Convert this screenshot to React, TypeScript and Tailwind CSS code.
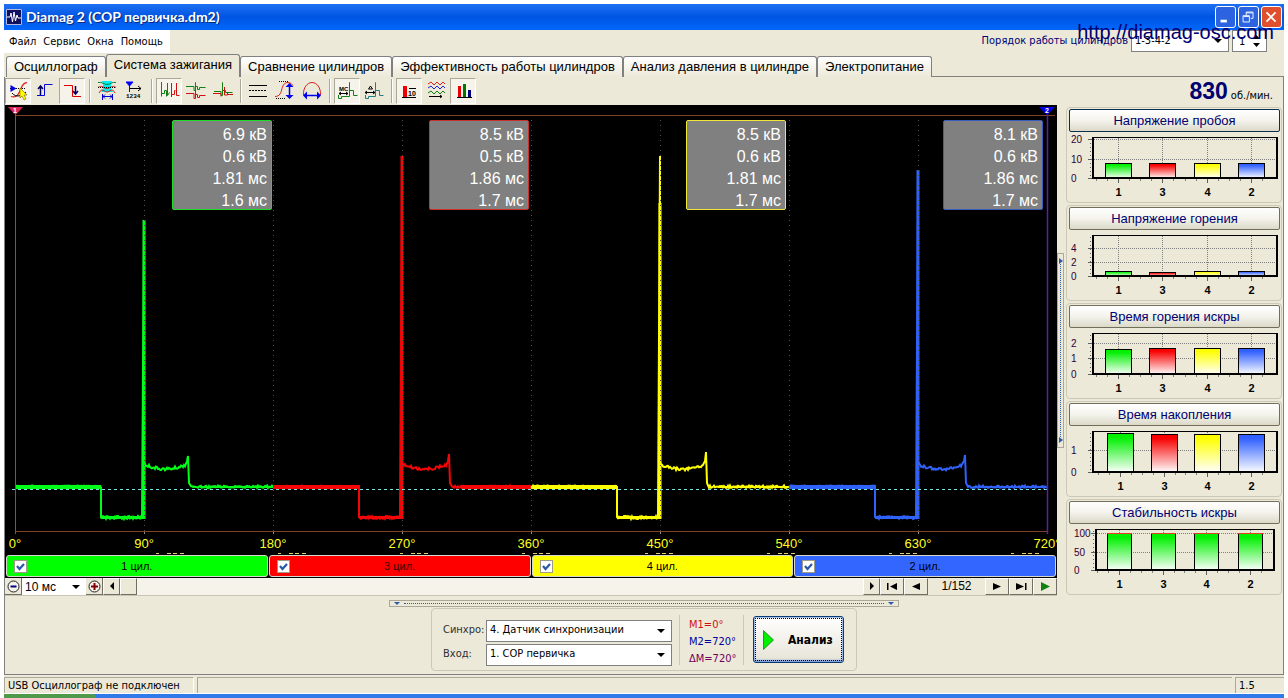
import { useState, type ReactNode } from 'react';
import clsx from 'clsx';

interface Cylinder {
  id: number;
  color: string;
  barClass: string;
  boxClass: string;
  values: string[];
  start: number;
  peak: number;
  spike: number;
  spikeTop: number;
}

const CYLINDERS: Cylinder[] = [
  { id: 1, color: '#00ff18', barClass: 'bg-[#00ff00]', boxClass: 'border-[#1edc28]', values: ['6.9 кВ', '0.6 кВ', '1.81 мс', '1.6 мс'], start: 10, peak: 115, spike: 173, spikeTop: 351 },
  { id: 3, color: '#f50505', barClass: 'bg-[#ff0000] text-[#400000]', boxClass: 'border-[#c8322e]', values: ['8.5 кВ', '0.5 кВ', '1.86 мс', '1.7 мс'], start: 268, peak: 51, spike: 176, spikeTop: 349 },
  { id: 4, color: '#ffff00', barClass: 'bg-[#ffff00]', boxClass: 'border-[#f0e63c]', values: ['8.5 кВ', '0.6 кВ', '1.81 мс', '1.7 мс'], start: 526, peak: 51, spike: 175, spikeTop: 347 },
  { id: 2, color: '#2f62fa', barClass: 'bg-[#3366ff]', boxClass: 'border-[#3a5cc0]', values: ['8.1 кВ', '0.6 кВ', '1.86 мс', '1.7 мс'], start: 784, peak: 65, spike: 176, spikeTop: 350 },
];

const TABS = [
  'Осциллограф',
  'Система зажигания',
  'Сравнение цилиндров',
  'Эффективность работы цилиндров',
  'Анализ давления в цилиндре',
  'Электропитание',
];

const DEGREES = ['0°', '90°', '180°', '270°', '360°', '450°', '540°', '630°', '720°'];

/* ---------- toolbar icons, all on a 26x26 canvas ---------- */

const ICONS: Record<string, ReactNode> = {
  cursor: (
    <>
      <path d="M5 10.500h16" stroke="#000" strokeDasharray="1 1" />
      <path d="M6 18.500c6 2 8-3 10-8s3-5 6-6" stroke="#e02020" strokeWidth="1.300" />
      <path d="M7 15c4 5 10 3 14-1" stroke="#000" />
      <path d="M5.500 7v7l6-3.500z" fill="#0000e8" />
      <path d="M15 10v10l2-2 2 4 2-1-2-4h3z" fill="#ffff00" stroke="#806000" strokeWidth=".6" />
    </>
  ),
  rise: (
    <>
      <path d="M5 17.500h7.500v-11h8" stroke="#0000e0" />
      <path d="M8.500 17V9M6 11l2.500-3L11 11" stroke="#000060" strokeWidth="1.500" />
    </>
  ),
  fall: (
    <>
      <path d="M5 7.500h8.500v11h8.500" stroke="#e00000" />
      <path d="M16.500 8v8M14 13l2.500 3 2.500-3" stroke="#000060" strokeWidth="1.500" />
    </>
  ),
  window: (
    <>
      <path d="M8 3h10l-1 4v4l2 3H7l2-3V7z" fill="#00f0f0" />
      <path d="M4 9.500c4-3 6 1 9 1s5-4 9-1M5 15c3-6 5-1 8-1s5-5 8 1" stroke="#d02020" />
      <path d="M4 4.500c4-1 6 2 9 2s5-3 9-2" stroke="#108040" />
      <path d="M4 9.500h18" stroke="#000" strokeDasharray="1 1" />
      <path d="M8.500 16v6M18.500 16v6M9 18.500h9M11 16.500l-2 2 2 2M16 16.500l2 2-2 2" stroke="#0000d0" />
    </>
  ),
  order: (
    <>
      <path d="M5 4h7l-3.500 4z" fill="#0000ff" stroke="#0000ff" />
      <path d="M8.500 7v7" stroke="#0000ff" />
      <path d="M9 10.500h11M17 8l3 2.500-3 2.500" stroke="#000" />
      <text x="5" y="20" fontSize="6" fontWeight="bold" fill="#000" fontFamily="Liberation Mono">1234</text>
    </>
  ),
  row: (
    <>
      <path d="M5.500 4v14.500M5.500 15.500h3v-3h2v6M11.500 5v12.500l2-3" stroke="#108010" />
      <path d="M15.500 5v14M15.500 16.500h3v-4h1M20.500 5v12.500h3" stroke="#d01010" />
    </>
  ),
  stack: (
    <>
      <path d="M3 8.500h8v4h1.500V4.500v4h2v3h2v-2h6" stroke="#108010" />
      <path d="M3 15.500h8v5h1.500v-8v4h2v3h2v-2h6" stroke="#d01010" />
    </>
  ),
  overlay: (
    <>
      <path d="M4 13.500h7v4h1.500V4.500v8h3v2h7" stroke="#108010" />
      <path d="M3 15.500h8v3M14.500 9v8h3v-3M17 16.500h6" stroke="#d01010" />
    </>
  ),
  lines: (
    <>
      <path d="M4 7.500h18M4 18.500h18" stroke="#000" />
      <path d="M4 12.500h18" stroke="#000" strokeDasharray="2 1" />
    </>
  ),
  vertical: (
    <>
      <path d="M7 3.500h9M4 20.500h9" stroke="#000" strokeDasharray="1 1" />
      <path d="M3 18.500c5 0 6-4 7-8s3-6 6-6 4 2 5 3" stroke="#d82020" />
      <path d="M17.500 7v12" stroke="#0000f0" strokeWidth="1.500" />
      <path d="M13.500 9h8l-4-4zM13.500 17h8l-4 4z" fill="#0000f0" />
    </>
  ),
  horizontal: (
    <>
      <path d="M4.500 17C4 10 8 4.500 13 4.500s9 5.500 8.500 12.500" stroke="#d82020" />
      <path d="M7 17.500h12" stroke="#0000f0" strokeWidth="1.500" />
      <path d="M8 13.500v8l-4-4zM18 13.500v8l4-4z" fill="#0000f0" />
    </>
  ),
  timeMark: (
    <>
      <text x="5" y="13" fontSize="6" fontWeight="bold" fill="#000" fontFamily="Liberation Sans">MC</text>
      <path d="M5 15.500h9M7 14l-2 1.500L7 17M12 14l2 1.500-2 1.500" stroke="#000" />
      <path d="M4.500 17v3.500h3v-2h8V4.500v8h4v5h4" stroke="#108010" />
    </>
  ),
  angleMark: (
    <>
      <path d="M9.500 8l-2 3h4zM4 14.500h10M6 13l-2 1.500L6 16M12 13l2 1.500-2 1.500" stroke="#000" />
      <path d="M4.500 17v3.500h3v-2h7V4.500v8h4v5h4" stroke="#208080" />
    </>
  ),
  numbers: (
    <>
      <path d="M7 8h4v11H7z" fill="#f00000" />
      <path d="M6 19.500h14M13 10.500h7" stroke="#000" />
      <text x="12" y="18" fontSize="7" fontWeight="bold" fill="#000" fontFamily="Liberation Sans">10</text>
    </>
  ),
  waves: (
    <>
      <path d="M5 6l3-2 3 3 3-3 3 3 3-3 2 2" stroke="#e02020" />
      <path d="M5 10l3-2 3 3 3-3 3 3 3-3 2 2" stroke="#2020e0" />
      <path d="M5 15l3-2 3 3 3-3 3 3 3-3 2 2" stroke="#108010" />
      <path d="M6 18.500h13M17 17l2 1.500-2 1.500" stroke="#000" />
    </>
  ),
  bars: (
    <>
      <path d="M8 8h3v11H8z" fill="#e80000" />
      <path d="M13 6h3v13h-3z" fill="#007800" />
      <path d="M18 12h3v7h-3z" fill="#000080" />
      <path d="M7 19.500h15" stroke="#000" />
    </>
  ),
};

const TOOLBAR: { name: string; label: string; pressed?: boolean }[][] = [
  [
    { name: 'cursor', label: 'Курсор', pressed: true },
    { name: 'rise', label: 'Фронт' },
    { name: 'fall', label: 'Спад', pressed: true },
  ],
  [
    { name: 'window', label: 'Окно' },
    { name: 'order', label: 'Порядок' },
  ],
  [
    { name: 'row', label: 'В ряд', pressed: true },
    { name: 'stack', label: 'Друг над другом' },
    { name: 'overlay', label: 'Наложение' },
  ],
  [
    { name: 'lines', label: 'Линии' },
    { name: 'vertical', label: 'По вертикали' },
    { name: 'horizontal', label: 'По горизонтали' },
  ],
  [
    { name: 'timeMark', label: 'Время', pressed: true },
    { name: 'angleMark', label: 'Угол' },
  ],
  [
    { name: 'numbers', label: 'Значения', pressed: true },
    { name: 'waves', label: 'Кадры' },
    { name: 'bars', label: 'Диаграммы', pressed: true },
  ],
];

function Toolbar() {
  return (
    <div className="flex items-center gap-px">
      {TOOLBAR.map((group, i) => (
        <div key={i} className="flex items-center gap-px">
          {i > 0 && <span className="mr-0.5 ml-[3px] h-6 w-0.5 border-l border-[#aca899] bg-white" />}
          {group.map((item) => (
            <button
              key={item.name}
              aria-label={item.label}
              aria-pressed={!!item.pressed}
              className={clsx(
                'size-[26px]',
                item.pressed && 'border border-t-[#aca899] border-r-white border-b-white border-l-[#aca899] bg-[#f5f3ea]',
              )}
            >
              <svg viewBox="0 0 26 26" fill="none" className={clsx('size-[26px]', item.pressed && '-m-px')}>
                {ICONS[item.name]}
              </svg>
            </button>
          ))}
        </div>
      ))}
    </div>
  );
}

/* ---------- oscilloscope ---------- */

const noise = (n: number) => {
  const s = Math.sin(n * 12.9898) * 43758.5453;
  return s - Math.floor(s);
};

function tracePath(c: Cylinder) {
  const pts: string[] = [];
  const put = (x: number, y: number) => pts.push(`${c.start + x},${y.toFixed(1)}`);
  for (let x = 0; x <= 86; x++) put(x, 380.5 + noise(c.start + x) * 2);
  put(86, 412);
  for (let x = 87; x <= 127; x++) put(x, 411 + noise(c.start + x) * 3);
  put(129, c.peak);
  put(129, 357);
  for (let x = 130; x < c.spike - 2; x++) {
    const t = (x - 130) / (c.spike - 132);
    put(x, 358 + 18 * t * (1 - t) + noise(c.start + x) * 3);
  }
  put(c.spike - 1, 356);
  put(c.spike, c.spikeTop);
  put(c.spike + 1, 378);
  for (let x = c.spike + 3; x <= 258; x++) put(x, 380.5 + noise(c.start + x * 3) * 2.5);
  return pts.join(' ');
}

function Trace({ c }: { c: Cylinder }) {
  const line = tracePath(c);
  return (
    <g fill="none" stroke={c.color}>
      <polyline points={line} strokeWidth="2" />
      <path d={`M${c.start} 382h86`} strokeWidth="4" />
      <path d={`M${c.start + c.spike + 12} 382h${246 - c.spike}`} strokeWidth={c.id === 3 ? 4 : 2} />
      <path d={`M${c.start + 86} 412.500h42`} strokeWidth="3" />
      <path d={`M${c.start + 129} 414V${c.id === 4 ? c.peak + 47 : c.peak}`} strokeWidth="3" />
    </g>
  );
}

function Scope({ visible }: { visible: Record<number, boolean> }) {
  return (
    <div className="relative min-h-[300px] flex-1 overflow-hidden">
      <svg viewBox="0 0 1052 429" preserveAspectRatio="none" className="absolute inset-0 size-full">
        {CYLINDERS.filter((c) => visible[c.id]).map((c) => (
          <Trace key={c.id} c={c} />
        ))}
        {[1, 2, 3, 4, 5, 6, 7].map((i) => (
          <g key={i}>
            <path d={`M${10.5 + i * 129} 15v411`} stroke="#505050" strokeDasharray="1 4" />
            <path d={`M${10.5 + i * 129} 427v4`} stroke="#909090" />
          </g>
        ))}
        <path d="M7 384.500h1037" stroke="#78e6e0" strokeDasharray="3 3" />
        <path d="M10 10.500h1040M10 426.500h1032" stroke="#80402c" />
        <path d="M10.500 9v422" stroke="#b03a50" />
        <path d="M1042.500 9v420" stroke="#5a22a0" strokeWidth="1.500" />
        <path d="M3 2h15l-7.500 8z" fill="#e0285a" />
        <path d="M1034 2h16l-8 8z" fill="#0000e8" />
        <text x="8" y="8" fontSize="7" fontWeight="bold" fill="#fff" fontFamily="Liberation Sans">1</text>
        <text x="1040" y="8" fontSize="7" fontWeight="bold" fill="#fff" fontFamily="Liberation Sans">2</text>
      </svg>
      <div className="absolute inset-x-0 top-[15px] grid grid-cols-4 pr-[14px] pl-[10px]">
        {CYLINDERS.map((c) => (
          <ul
            key={c.id}
            className={clsx('h-[90px] w-[100px] justify-self-end rounded-xs border bg-[#808080] pt-[3px] pr-1 text-right text-[16px] leading-[22px] text-white', c.boxClass)}
          >
            {c.values.map((v, i) => (
              <li key={i}>{v}</li>
            ))}
          </ul>
        ))}
      </div>
    </div>
  );
}

/* ---------- side charts ---------- */

interface SideChart {
  title: string;
  ticks: [string, number][];
  left: number;
  right: number;
  labelX: number;
  barX: number[];
  barWidth: number;
  tops: number[];
  colors: string[];
}

const MIXED = ['green', 'red', 'yellow', 'blue'];
const CHARTS: SideChart[] = [
  { title: 'Напряжение пробоя', ticks: [['20', 6], ['10', 26], ['0', 45]], left: 23, right: 209, labelX: 2, barX: [36, 80, 125, 169], barWidth: 27, tops: [30, 30, 30, 30], colors: MIXED },
  { title: 'Напряжение горения', ticks: [['4', 17], ['2', 31], ['0', 45]], left: 23, right: 209, labelX: 2, barX: [36, 80, 125, 169], barWidth: 27, tops: [40, 41, 40, 40], colors: MIXED },
  { title: 'Время горения искры', ticks: [['2', 14], ['1', 29], ['0', 45]], left: 23, right: 209, labelX: 2, barX: [36, 80, 125, 169], barWidth: 27, tops: [20, 19, 19, 19], colors: MIXED },
  { title: 'Время накопления', ticks: [['1', 23], ['0', 45]], left: 23, right: 209, labelX: 2, barX: [38, 82, 125, 169], barWidth: 27, tops: [6, 7, 7, 7], colors: MIXED },
  { title: 'Стабильность искры', ticks: [['100', 8], ['50', 27], ['0', 45]], left: 26, right: 206, labelX: 5, barX: [38, 82, 125, 169], barWidth: 25, tops: [8, 8, 8, 8], colors: ['green', 'green', 'green', 'green'] },
];

function SideChartView({ chart, focused }: { chart: SideChart; focused: boolean }) {
  const { left, right } = chart;
  return (
    <section className="rounded-[4px] border border-[#cbc8b6] p-px pl-0.5">
      <button
        className={clsx(
          'mb-px block h-[23px] w-full rounded-xs border bg-linear-to-b from-white via-[#f4f3ec] to-[#dcd9c8] text-[13px] leading-5 text-[#000070]',
          focused ? 'border-[#0a3050]' : 'border-[#716f5c]',
        )}
      >
        {chart.title}
      </button>
      <svg viewBox="0 0 211 68" className="block w-full" shapeRendering="crispEdges" fontFamily="Liberation Sans">
        {chart.ticks.map(([label, y]) => (
          <g key={label}>
            <path d={`M${left} ${y + 0.5}H${right}`} stroke="#808080" strokeDasharray="1 1" />
            <path d={`M${left - 4} ${y + 0.5}h4`} stroke="#606060" />
            <text x={chart.labelX} y={y + 4} fontSize="10" fill="#300030">{label}</text>
          </g>
        ))}
        {chart.barX.map((x, i) => {
          const mid = x + Math.floor(chart.barWidth / 2) + 0.5;
          const top = chart.tops[i];
          return (
            <g key={x}>
              <path d={`M${mid} 5V45`} stroke="#808080" strokeDasharray="1 1" />
              <path d={`M${mid} 46v4`} stroke="#606060" />
              <path d={`M${mid - 11} 46v2M${mid + 11} 46v2M${mid - 22} 46v2`} stroke="#808080" />
              <rect
                x={x + 0.5}
                y={top + 0.5}
                width={chart.barWidth - 1}
                height={45 - top}
                fill={`url(#bar-${chart.colors[i]})`}
                stroke="#000"
              />
              {top === 8 && <path d={`M${x} 8.500h${chart.barWidth}`} stroke="#e04020" />}
              <text x={mid} y="63" fontSize="11" fontWeight="bold" textAnchor="middle" fill="#000">
                {CYLINDERS[i].id}
              </text>
            </g>
          );
        })}
        <path d={`M${left - 1.5} 6V44`} stroke="#606060" strokeDasharray="1 3" />
        <path d={`M${left} 4.500H${right}`} stroke="#000" />
        <path d={`M${left + 1} 4V46M${right - 1} 4V46M${left} 45H${right}`} stroke="#000" strokeWidth="2" />
      </svg>
    </section>
  );
}

function Gradients() {
  const stops: [string, string][] = [['green', '#00f000'], ['red', '#f80000'], ['yellow', '#ffff00'], ['blue', '#3060ff']];
  return (
    <svg className="absolute size-0" aria-hidden="true">
      <defs>
        {stops.map(([id, color]) => (
          <linearGradient key={id} id={`bar-${id}`} x1="0" y1="0" x2="0" y2="1">
            <stop offset="0.1" stopColor={color} />
            <stop offset="1" stopColor="#fff" />
          </linearGradient>
        ))}
      </defs>
    </svg>
  );
}

/* ---------- small controls ---------- */

function Combo({ label, value, className }: { label: string; value: string; className: string }) {
  return (
    <span className={clsx('relative inline-block bg-white', className)}>
      <select aria-label={label} className="block size-full appearance-none truncate pr-4 pl-[3px] outline-none">
        <option>{value}</option>
      </select>
      <svg viewBox="0 0 8 4" className="pointer-events-none absolute top-1/2 right-1.5 -mt-0.5 h-1 w-2">
        <path d="M0 0h8L4 4z" />
      </svg>
    </span>
  );
}

function NavButton({ label, d, className, green }: { label: string; d: string; className: string; green?: boolean }) {
  return (
    <button
      aria-label={label}
      className={clsx('flex h-[17px] items-center justify-center border border-t-white border-r-[#716f64] border-b-[#716f64] border-l-white bg-[#ece9d8]', className)}
    >
      <svg viewBox="0 0 12 9" className="h-[9px] w-3" fill={green ? '#108010' : '#000'}>
        <path d={d} />
      </svg>
    </button>
  );
}

function ZoomButton({ label, plus }: { label: string; plus?: boolean }) {
  return (
    <button
      aria-label={label}
      className="flex size-[17px] items-center justify-center border-r border-b border-[#716f64] bg-[#ece9d8]"
    >
      <svg viewBox="0 0 13 13" className="size-[13px]" fill="none">
        <circle cx="6.500" cy="6.500" r="5.500" stroke="#202020" fill="#f6f4ea" />
        <path d={plus ? 'M3 6.500h7M6.500 3v7' : 'M3.500 6.500h6'} stroke={plus ? '#800000' : '#000080'} strokeWidth="2" />
      </svg>
    </button>
  );
}

function TitleBar() {
  const button = 'flex h-[22px] w-[21px] items-center justify-center rounded-[3px] border border-white';
  return (
    <header className="flex h-[26px] items-center bg-linear-to-b from-[#1e70f2] via-[#0054e3] to-[#0068fb] pr-0.5 pl-0.5">
      <svg viewBox="0 0 16 16" className="size-4" fill="none">
        <path d="M0 0h16v16H0z" fill="#101060" />
        <path d="M.5.5h15v15H.5z" stroke="#b0b8e0" />
        <path d="M1 8h3l1-4 1.500 9L8 3l1.500 9L11 6l1 3h3" stroke="#fff" />
      </svg>
      <h1 className="ml-1 flex-1 font-['Lato','Open_Sans',sans-serif] text-[14px] leading-5 font-bold text-white [text-shadow:1px_1px_#0a2a80]">
        Diamag 2 (COP первичка.dm2)
      </h1>
      <div className="flex gap-0.5">
        <button aria-label="Свернуть" className={clsx(button, 'bg-[#2c63e0]')}>
          <svg viewBox="0 0 21 22" className="h-[22px] w-[21px]"><path d="M5 14h7v3H5z" fill="#fff" /></svg>
        </button>
        <button aria-label="Восстановить" className={clsx(button, 'bg-[#2c63e0]')}>
          <svg viewBox="0 0 21 22" className="h-[22px] w-[21px]" fill="none" stroke="#fff">
            <path d="M8 9V5.500h7.500v7H13M8 6.500h7M4.500 9.500h7v7h-7zM5 10.500h6" />
          </svg>
        </button>
        <button aria-label="Закрыть" className={clsx(button, 'bg-[#e0502c]')}>
          <svg viewBox="0 0 21 22" className="h-[22px] w-[21px]"><path d="M5 6l10 10M15 6L5 16" stroke="#fff" strokeWidth="2" /></svg>
        </button>
      </div>
    </header>
  );
}

export default function App() {
  const [active, setActive] = useState(1);
  const [visible, setVisible] = useState<Record<number, boolean>>({ 1: true, 2: true, 3: true, 4: true });

  return (
    <div className="flex min-h-screen flex-col bg-white px-1 pt-1 font-['Liberation_Sans',Arial,sans-serif] text-[11px] text-black">
      <Gradients />
      <TitleBar />

      <div className="flex flex-1 flex-col bg-[#ece9d8]">
        <div className="relative flex h-[23px] items-start justify-between">
          <nav className="flex h-full items-center gap-[7px] bg-white pt-px pr-[7px] pl-[5px] font-['DejaVu_Sans_Condensed','DejaVu_Sans',sans-serif]">
            {['Файл', 'Сервис', 'Окна', 'Помощь'].map((item) => (
              <button key={item}>{item}</button>
            ))}
          </nav>
          <div className="flex items-center gap-[3px] pr-[17px] font-['DejaVu_Sans_Condensed','DejaVu_Sans',sans-serif] text-[#000070]">
            <span>Порядок работы цилиндров</span>
            <Combo label="Порядок работы цилиндров" value="1-3-4-2" className="h-[22px] w-[98px] border border-[#808080] text-black" />
            <span className="relative inline-block h-[22px] w-[35px] border border-[#808080] bg-white text-black">
              <input aria-label="Номер" defaultValue="1" className="size-full pl-1.5 outline-none" />
              <svg viewBox="0 0 7 12" className="pointer-events-none absolute top-1 right-1.5 h-3 w-[7px]">
                <path d="M0 4h7L3.500 0zM0 8h7l-3.500 4z" />
              </svg>
            </span>
          </div>
          <a href="http://diamag-osc.com" className="absolute top-[-10px] right-[10px] text-[20px] leading-6 text-[#000070]">
            http://diamag-osc.com
          </a>
        </div>

        <div role="tablist" className="flex h-6 items-end pl-0.5">
          {TABS.map((tab, i) => (
            <button
              key={tab}
              role="tab"
              aria-selected={i === active}
              onClick={() => setActive(i)}
              className={clsx(
                'rounded-t-[3px] border border-b-0 border-[#808080] px-[7px] text-[13px]',
                i === active ? 'h-[23px] bg-[#ece9d8] pb-0.5' : 'h-[21px] bg-linear-to-b from-white to-[#ece9d8]',
              )}
            >
              {tab}
            </button>
          ))}
          <span className="flex-1 self-stretch border-b border-[#808080]" />
        </div>

        <main className="flex flex-1 flex-col border-x border-b border-[#808080]">
          <div className="flex h-7 items-center justify-between pr-2.5">
            <Toolbar />
            <p className="flex items-baseline gap-[3px]">
              <strong className="text-[23px] leading-7 text-[#000070]">830</strong>
              <span className="font-['DejaVu_Sans_Condensed','DejaVu_Sans',sans-serif]">об./мин.</span>
            </p>
          </div>

          <div className="flex flex-1">
            <div className="flex min-w-0 flex-1 flex-col">
              <div className="flex flex-1 flex-col bg-black pb-px">
                <Scope visible={visible} />
                <div className="flex h-[18px] justify-between overflow-hidden px-[10px] text-[13px] leading-5 text-[#ffff20]">
                  {DEGREES.map((d) => (
                    <span key={d} className="flex w-0 justify-center">{d}</span>
                  ))}
                </div>
                {/* minor marks of the time scale, just above the cylinder bars */}
                <div className="flex h-[3px] items-center justify-between pr-[17px] pl-[150px]">
                  {DEGREES.slice(1).map((d) => (
                    <svg key={d} viewBox="0 0 30 1" className="h-px w-[30px]">
                      <path d="M1 .5h3M12 .5h4M18 .5h4M25 .5h4" stroke="#e8d070" />
                    </svg>
                  ))}
                </div>
                <div className="grid grid-cols-4 gap-px px-px">
                  {CYLINDERS.map((c) => (
                    <label
                      key={c.id}
                      className={clsx('grid h-[22px] grid-cols-[13px_1fr_13px] items-center rounded-[3px] border border-[#d8d8c8] px-[7px] text-[11px]', c.barClass)}
                    >
                      <span className="relative size-[13px]">
                        <input
                          type="checkbox"
                          checked={visible[c.id]}
                          onChange={(e) => setVisible({ ...visible, [c.id]: e.target.checked })}
                          className="block size-[13px] appearance-none border border-[#9c9c88] bg-white"
                        />
                        {visible[c.id] && (
                          <svg viewBox="0 0 13 13" className="pointer-events-none absolute inset-0 size-[13px]" fill="none">
                            <path d="M3 6l2.500 3L10 4" stroke="#2c5aa8" strokeWidth="2.200" />
                          </svg>
                        )}
                      </span>
                      <span className="text-center">{c.id} цил.</span>
                    </label>
                  ))}
                </div>
              </div>

              <div className="flex h-[18px] items-center border-b border-[#c8c5b4] bg-[#f5f3ea]">
                <ZoomButton label="Уменьшить" />
                <Combo label="Развёртка" value="10 мс" className="h-[17px] w-[64px] text-[12px]" />
                <ZoomButton label="Увеличить" plus />
                <NavButton label="Влево" d="M8 0v8L4 4z" className="w-[17px]" />
                <NavButton label="Ползунок" d="" className="w-[17px]" />
                <span className="flex-1" />
                <NavButton label="Вправо" d="M4 0v8l4-4z" className="w-[17px]" />
                <NavButton label="Первый кадр" d="M1 1h1.500v7H1zM11 1v7L4 4.500z" className="w-6" />
                <NavButton label="Предыдущий кадр" d="M10 1v7L2 4.500z" className="w-6" />
                <output className="w-[57px] bg-[#ece9d8] text-center text-[12px] leading-[17px]">1/152</output>
                <NavButton label="Следующий кадр" d="M2 1v7l8-3.500z" className="w-6" />
                <NavButton label="Последний кадр" d="M10 1h1.500v7H10zM1 1v7l8-3.500z" className="w-6" />
                <NavButton label="Пуск" d="M2 0v9l9-4.500z" className="w-6" green />
              </div>
            </div>

            <div className="flex w-[9px] items-center">
              <div className="-mt-px flex h-[195px] w-[7px] flex-col items-center justify-between border border-[#aca899] py-1">
                <svg viewBox="0 0 4 6" className="h-1.5 w-1"><path d="M0 0v6l4-3z" fill="#2c5aa8" /></svg>
                <span className="w-0 flex-1 border-l border-dotted border-[#2c5aa8]" />
                <svg viewBox="0 0 4 6" className="h-1.5 w-1"><path d="M0 0v6l4-3z" fill="#2c5aa8" /></svg>
              </div>
            </div>

            <aside className="flex w-[217px] flex-col gap-0.5 pt-0.5 pr-px">
              {CHARTS.map((chart, i) => (
                <SideChartView key={chart.title} chart={chart} focused={i === 0} />
              ))}
            </aside>
          </div>

          <div className="flex flex-col items-center pt-1 pb-[3px]">
            <div className="flex h-[7px] w-[510px] items-center gap-1 border border-[#aca899] px-1">
              <svg viewBox="0 0 6 3" className="h-[3px] w-1.5"><path d="M0 0h6L3 3z" fill="#2c5aa8" /></svg>
              <span className="h-0 flex-1 border-t border-dotted border-[#2c5aa8]" />
              <svg viewBox="0 0 6 3" className="h-[3px] w-1.5"><path d="M0 0h6L3 3z" fill="#2c5aa8" /></svg>
            </div>
            <div className="mt-px flex h-[63px] items-center rounded-[4px] border border-[#cbc8b6] pr-[12px] pl-[11px] font-['DejaVu_Sans_Condensed','DejaVu_Sans',sans-serif]">
              <div className="grid grid-cols-[43px_186px] items-center gap-y-0.5 pt-1.5 text-[#303030]">
                <span>Синхро:</span>
                <Combo label="Синхро" value="4.  Датчик синхронизации" className="h-[22px] border border-[#808080] text-black" />
                <span>Вход:</span>
                <Combo label="Вход" value="1.  COP первичка" className="h-[22px] border border-[#808080] text-black" />
              </div>
              <dl className="ml-[7px] h-[50px] w-[65px] border-x border-[#cbc8b6] pt-px pl-[9px] leading-[17px]">
                <dd className="text-[#d01010]">M1=0°</dd>
                <dd className="text-[#0000a0]">M2=720°</dd>
                <dd className="text-[#700060]">ΔM=720°</dd>
              </dl>
              <button className="ml-[9px] flex h-[47px] w-[91px] items-center gap-3.5 rounded-[3px] border border-[#0a3c74] bg-linear-to-b from-white to-[#e6e3d6] pl-[9px] text-[12px] font-bold shadow-[inset_0_-2px_2px_#7f9fd8,inset_0_0_0_1px_#a9c4f0] outline-1 -outline-offset-3 outline-black outline-dotted">
                <svg viewBox="0 0 11 20" className="h-5 w-[11px]"><path d="M.5.5v19l10-9.500z" fill="#00f000" stroke="#309030" /></svg>
                Анализ
              </button>
            </div>
          </div>
        </main>

        <footer className="flex h-[19px] gap-[3px] border-b border-white pt-0.5 font-['DejaVu_Sans_Condensed','DejaVu_Sans',sans-serif] leading-4">
          <span className="w-[190px] border-t border-r border-l border-[#aca899] border-r-white pl-[3px]">USB Осциллограф не подключен</span>
          <span className="flex-1 border-t border-l border-[#aca899]" />
          <span className="w-[49px] border-t border-l border-[#aca899] pl-[3px]">1.5</span>
        </footer>
        <div className="flex h-1 bg-[#2f7ae8]">
          <span className="w-[92px] rounded-tr-sm bg-[#4f9a4a]" />
        </div>
      </div>
    </div>
  );
}
